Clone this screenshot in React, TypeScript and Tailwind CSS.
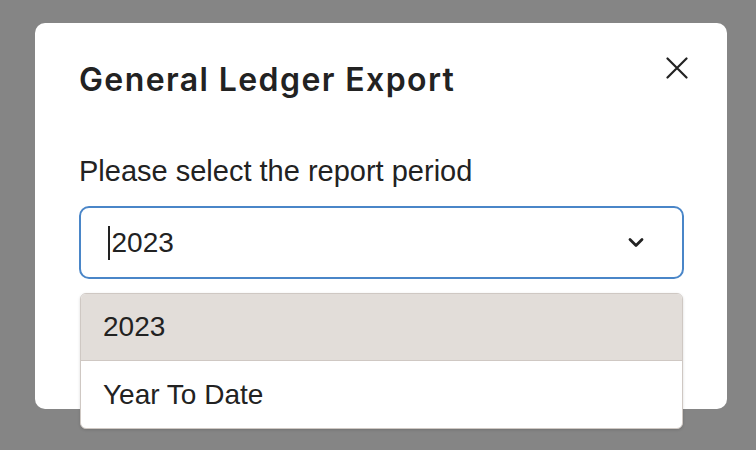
import React from "react";

export default function App() {
  return (
    <div
      className="w-[756px] h-[450px] bg-[#858585] overflow-hidden relative"
      style={{ fontFamily: '"Liberation Sans", Arial, sans-serif' }}
    >
      <div className="ml-[35px] mt-[23px] w-[692px] h-[386px] bg-white rounded-[10px]">
        <div className="flex items-start justify-between pl-[44px] pr-[39px] pt-[37px]">
          <h1
            className="text-[32px] leading-[40px] font-semibold text-[#222222] tracking-[1.4px]"
            style={{ fontFamily: 'Inter, "Liberation Sans", sans-serif' }}
          >
            General Ledger Export
          </h1>
          <button className="mt-[-3px] text-[#222222]">
            <svg width="22" height="22" viewBox="0 0 22 22" fill="none" stroke="currentColor" strokeWidth="2.2" strokeLinecap="round">
              <path d="M1.5 1.5 L20.5 20.5 M20.5 1.5 L1.5 20.5" />
            </svg>
          </button>
        </div>
        <div className="pl-[44px] pr-[43px] mt-[53px]">
          <div className="text-[29px] leading-[36px] text-[#222222]">Please select the report period</div>
          <div className="mt-[17px] h-[73px] border-2 border-[#4a86c8] rounded-[10px] flex items-center pl-[27px] pr-[38px] justify-between">
            <div className="flex items-center text-[28px] text-[#222222]">
              <span className="w-[1.5px] h-[34px] bg-[#222222] mr-[2px]" />
              2023
            </div>
            <svg width="16" height="11" viewBox="0 0 16 11" fill="none" stroke="#222222" strokeWidth="2.8" strokeLinecap="round" strokeLinejoin="round">
              <path d="M2 2.5 L8 8.5 L14 2.5" />
            </svg>
          </div>
        </div>
      </div>
      <div className="absolute left-[80px] top-[293px] w-[603px] bg-white rounded-[6px] border border-[#cfc8c3] shadow-[0_1px_3px_rgba(0,0,0,0.15)] overflow-hidden">
        <div className="h-[67px] bg-[#e2ddd9] border-b border-[#cfc8c3] flex items-center pl-[22px] text-[28px] text-[#222222]">
          2023
        </div>
        <div className="h-[67px] flex items-center pl-[22px] text-[28px] text-[#222222]">
          Year To Date
        </div>
      </div>
    </div>
  );
}
